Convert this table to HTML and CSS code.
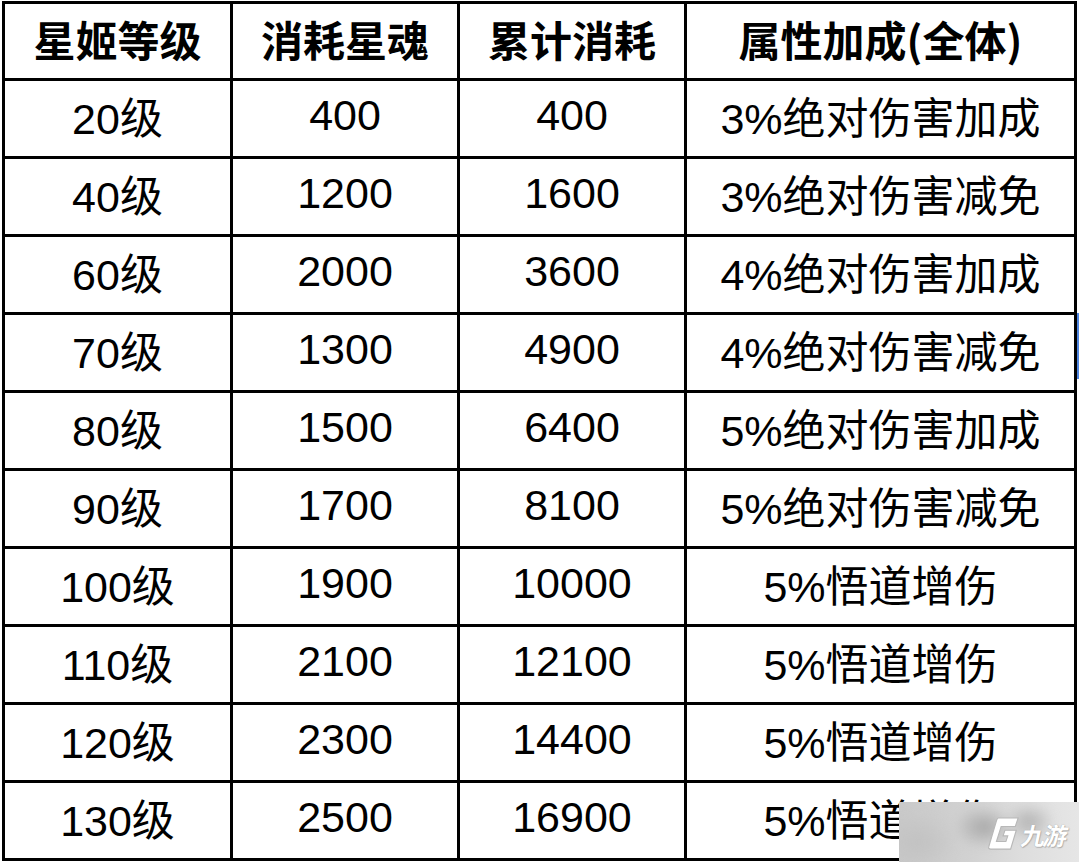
FILE: index.html
```html
<!DOCTYPE html>
<html lang="zh-CN">
<head>
<meta charset="utf-8">
<title>星姬等级</title>
<link rel="stylesheet" href="styles.css">
</head>
<body>
<div class="page">
  <div class="grid">
    <div class="cell head">星姬等级</div>
    <div class="cell head">消耗星魂</div>
    <div class="cell head">累计消耗</div>
    <div class="cell head">属性加成(全体)</div>

    <div class="cell">20级</div><div class="cell">400</div><div class="cell">400</div><div class="cell">3%绝对伤害加成</div>
    <div class="cell">40级</div><div class="cell">1200</div><div class="cell">1600</div><div class="cell">3%绝对伤害减免</div>
    <div class="cell">60级</div><div class="cell">2000</div><div class="cell">3600</div><div class="cell">4%绝对伤害加成</div>
    <div class="cell">70级</div><div class="cell">1300</div><div class="cell">4900</div><div class="cell">4%绝对伤害减免</div>
    <div class="cell">80级</div><div class="cell">1500</div><div class="cell">6400</div><div class="cell">5%绝对伤害加成</div>
    <div class="cell">90级</div><div class="cell">1700</div><div class="cell">8100</div><div class="cell">5%绝对伤害减免</div>
    <div class="cell">100级</div><div class="cell">1900</div><div class="cell">10000</div><div class="cell">5%悟道增伤</div>
    <div class="cell">110级</div><div class="cell">2100</div><div class="cell">12100</div><div class="cell">5%悟道增伤</div>
    <div class="cell">120级</div><div class="cell">2300</div><div class="cell">14400</div><div class="cell">5%悟道增伤</div>
    <div class="cell">130级</div><div class="cell">2500</div><div class="cell">16900</div><div class="cell">5%悟道增伤</div>
  </div>

  <div class="blue-mark"></div>

  <div class="wm">
    <div class="wm-blur"></div>
    <div class="wm-logo">
      <svg class="wm-icon" width="34" height="38" viewBox="0 0 36 40">
        <path d="M12 3 L33 3 L30 12 L15 12 L10 28 L20 28 L22 22 L17 22 L19 16 L31 16 L25 36 L4 36 Q1 36 2 33 L10 6 Q11 3 12 3 Z" fill="#ffffff" stroke="#b8b8b8" stroke-width="1.2"/>
      </svg>
      <span class="wm-text">九游</span>
    </div>
  </div>
</div>
</body>
</html>
```

FILE: styles.css
```css
html, body {
  margin: 0;
  padding: 0;
  background: #ffffff;
}

.page {
  position: relative;
  width: 1079px;
  height: 862px;
  overflow: hidden;
}

.grid {
  display: grid;
  grid-template-columns: 228px 227px 227px 390px;
  grid-template-rows: 77px repeat(10, 78px);
  width: max-content;
  margin: 1px 0 0 2px;
  border-left: 3px solid #000;
  border-top: 3px solid #000;
}

.cell {
  box-sizing: border-box;
  border-right: 3px solid #000;
  border-bottom: 3px solid #000;
  display: flex;
  align-items: center;
  justify-content: center;
  font-family: "Liberation Sans", "Noto Sans CJK SC", sans-serif;
  font-size: 43px;
  color: #000;
  white-space: nowrap;
  padding-bottom: 7px;
}

.head {
  font-weight: 700;
  font-family: "Noto Sans CJK SC", "Liberation Sans", sans-serif;
  font-size: 42px;
  padding-bottom: 5px;
}

.blue-mark {
  position: absolute;
  left: 1077px;
  top: 313px;
  width: 2px;
  height: 66px;
  background: #4f86e0;
}

.wm {
  position: absolute;
  left: 899px;
  top: 802px;
  width: 180px;
  height: 60px;
  overflow: hidden;
  background: linear-gradient(90deg, #c9c9c9 0%, #d2d2d2 40%, #dedede 70%, #e6e6e6 100%);
}

.wm-blur {
  position: absolute;
  inset: -10px;
  background:
    radial-gradient(ellipse 30px 22px at 95px 35px, #a9a9a9, rgba(170,170,170,0) 100%),
    radial-gradient(ellipse 26px 20px at 140px 30px, #b4b4b4, rgba(180,180,180,0) 100%),
    radial-gradient(ellipse 40px 30px at 30px 50px, #c2c2c2, rgba(194,194,194,0) 100%);
  filter: blur(4px);
}

.wm-logo {
  position: absolute;
  left: 88px;
  top: 13px;
  display: flex;
  align-items: center;
}

.wm-icon {
  display: block;
}

.wm-text {
  font-family: "Noto Sans CJK SC", sans-serif;
  font-weight: 700;
  font-size: 24px;
  color: #ffffff;
  display: inline-block;
  transform: skewX(-12deg);
  text-shadow: 0 0 1px #9a9a9a, 1px 1px 1px #b0b0b0;
  letter-spacing: -2px;
  margin-left: 1px;
}
```
